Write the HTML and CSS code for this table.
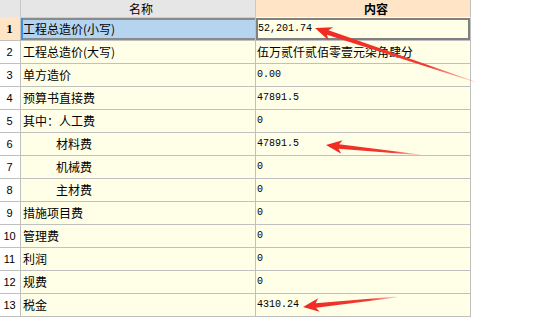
FILE: index.html
```html
<!DOCTYPE html>
<html lang="zh">
<head>
<meta charset="utf-8">
<title>工程造价汇总</title>
<link rel="stylesheet" href="styles.css">
</head>
<body>
<div class="sheet">
  <div class="row head">
    <div class="cell num hcell"></div>
    <div class="cell name hcell">名称</div>
    <div class="cell val hcell hval">内容</div>
  </div>
  <div class="row sel">
    <div class="cell num">1</div>
    <div class="cell name">工程总造价(小写)</div>
    <div class="cell val mono">52,201.74</div>
  </div>
  <div class="row">
    <div class="cell num">2</div>
    <div class="cell name">工程总造价(大写)</div>
    <div class="cell val">伍万贰仟贰佰零壹元柒角肆分</div>
  </div>
  <div class="row">
    <div class="cell num">3</div>
    <div class="cell name">单方造价</div>
    <div class="cell val mono">0.00</div>
  </div>
  <div class="row">
    <div class="cell num">4</div>
    <div class="cell name">预算书直接费</div>
    <div class="cell val mono">47891.5</div>
  </div>
  <div class="row">
    <div class="cell num">5</div>
    <div class="cell name">其中：人工费</div>
    <div class="cell val mono">0</div>
  </div>
  <div class="row">
    <div class="cell num">6</div>
    <div class="cell name indent">材料费</div>
    <div class="cell val mono">47891.5</div>
  </div>
  <div class="row">
    <div class="cell num">7</div>
    <div class="cell name indent">机械费</div>
    <div class="cell val mono">0</div>
  </div>
  <div class="row">
    <div class="cell num">8</div>
    <div class="cell name indent">主材费</div>
    <div class="cell val mono">0</div>
  </div>
  <div class="row">
    <div class="cell num">9</div>
    <div class="cell name">措施项目费</div>
    <div class="cell val mono">0</div>
  </div>
  <div class="row">
    <div class="cell num">10</div>
    <div class="cell name">管理费</div>
    <div class="cell val mono">0</div>
  </div>
  <div class="row">
    <div class="cell num">11</div>
    <div class="cell name">利润</div>
    <div class="cell val mono">0</div>
  </div>
  <div class="row">
    <div class="cell num">12</div>
    <div class="cell name">规费</div>
    <div class="cell val mono">0</div>
  </div>
  <div class="row">
    <div class="cell num">13</div>
    <div class="cell name">税金</div>
    <div class="cell val mono">4310.24</div>
  </div>
</div>
<svg class="arrows" width="541" height="336" viewBox="0 0 541 336" aria-hidden="true">
  <defs>
    <linearGradient id="fade1" gradientUnits="userSpaceOnUse" x1="0" y1="0" x2="169" y2="0">
      <stop offset="0" stop-color="#f02a22"/>
      <stop offset="0.7" stop-color="#f23a30"/>
      <stop offset="1" stop-color="#f23a30" stop-opacity="0.15"/>
    </linearGradient>
    <linearGradient id="fade2" gradientUnits="userSpaceOnUse" x1="0" y1="0" x2="95" y2="0">
      <stop offset="0" stop-color="#f02a22"/>
      <stop offset="0.7" stop-color="#f23a30"/>
      <stop offset="1" stop-color="#f23a30" stop-opacity="0.15"/>
    </linearGradient>
  </defs>
  <g transform="translate(315 28) rotate(18.6)">
    <polygon fill="url(#fade1)" points="0,0 17,-6.5 13.5,-2.2 169,-0.4 169,0.4 13.5,2.6 17,7.5"/>
  </g>
  <g transform="translate(326 145) rotate(6)">
    <polygon fill="url(#fade2)" points="0,0 16,-6.5 13,-2.2 95,-0.4 95,0.4 13,2.4 16,7"/>
  </g>
  <g transform="translate(303 307) rotate(-6.1)">
    <polygon fill="url(#fade2)" points="0,0 16,-7 13,-2.4 94,-0.4 94,0.4 13,2.2 16,6.5"/>
  </g>
</svg>
</body>
</html>
```
FILE: styles.css
```css
html, body {
  margin: 0;
  padding: 0;
  background: #ffffff;
}

body {
  width: 541px;
  height: 336px;
  overflow: hidden;
  position: relative;
  font-family: "Noto Sans CJK SC", "Noto Sans", sans-serif;
  font-size: 12px;
  color: #000;
}

.sheet {
  width: 471px;
}

.row {
  display: grid;
  grid-template-columns: 21px 235px 215px;
  height: 23px;
}

.cell {
  box-sizing: border-box;
  border-right: 1px solid #c0c0c0;
  border-bottom: 1px solid #c0c0c0;
  background: #ffffe8;
  white-space: nowrap;
  overflow: hidden;
  line-height: 22px;
}

.num {
  background: #ffffff;
  text-align: center;
  font-family: "Liberation Sans", sans-serif;
  font-size: 11px;
  padding-right: 1px;
}

.name {
  padding-left: 2px;
}

.name.indent {
  padding-left: 35px;
}

.val {
  padding-left: 1px;
}

.mono {
  font-family: "Liberation Mono", monospace;
  font-size: 10px;
}

/* header */
.row.head {
  height: 17px;
}

.hcell {
  background: #e6e6e6;
  line-height: 17px;
  text-align: center;
  border-bottom-color: #a8a8a8;
  border-right-color: #c8c8c8;
  overflow: visible;
}

.hcell.name {
  padding-left: 6px;
}

.hval {
  background: #ffe4c6;
  font-weight: bold;
  border-bottom: 2px solid #3d8ee8;
  border-right-color: #c0c0c0;
  padding-left: 26px;
}

/* selected row */
.row.sel {
  height: 24px;
}

.sel .cell {
  border-top: 1px solid transparent;
  border-bottom-color: #c0c0c0;
  line-height: 22px;
}

.sel .num {
  background: #ffe4c6;
  font-family: "Liberation Serif", serif;
  font-weight: bold;
  font-size: 13px;
}

.sel .name {
  background: #b4d4f0;
  box-shadow: inset 2px 0 0 #3d8ee8, inset 0 2px 0 #8a8a8a, inset 0 -2px 0 #8a8a8a;
}

.sel .val {
  padding-left: 2px;
  box-shadow: inset 0 0 0 2px #808080;
}

.arrows {
  position: absolute;
  left: 0;
  top: 0;
  pointer-events: none;
}
```
